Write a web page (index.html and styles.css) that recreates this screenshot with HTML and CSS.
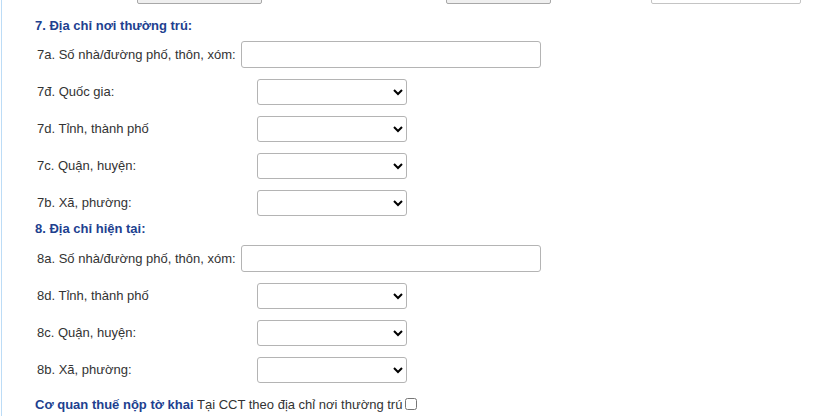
FILE: index.html
```html
<!DOCTYPE html>
<html lang="vi">
<head>
  <meta charset="UTF-8" />
  <meta name="viewport" content="width=device-width, initial-scale=1.0" />
  <title>Địa chỉ</title>
  <link rel="stylesheet" href="styles.css">
</head>
<body>
  <div class="form">
    <div class="top-row">
      <button class="btn btn-1"></button>
      <button class="btn btn-2"></button>
      <input type="text" class="top-input">
    </div>

    <div class="heading h7">7. Địa chỉ nơi thường trú:</div>
    <div class="row">
      <span class="label">7a. Số nhà/đường phố, thôn, xóm:</span>
      <input type="text" class="text-input">
    </div>
    <div class="row">
      <span class="label fixed">7đ. Quốc gia:</span>
      <select class="select"><option></option></select>
    </div>
    <div class="row">
      <span class="label fixed">7d. Tỉnh, thành phố</span>
      <select class="select"><option></option></select>
    </div>
    <div class="row">
      <span class="label fixed">7c. Quận, huyện:</span>
      <select class="select"><option></option></select>
    </div>
    <div class="row">
      <span class="label fixed">7b. Xã, phường:</span>
      <select class="select"><option></option></select>
    </div>

    <div class="heading h8">8. Địa chỉ hiện tại:</div>
    <div class="row">
      <span class="label">8a. Số nhà/đường phố, thôn, xóm:</span>
      <input type="text" class="text-input">
    </div>
    <div class="row">
      <span class="label fixed">8d. Tỉnh, thành phố</span>
      <select class="select"><option></option></select>
    </div>
    <div class="row">
      <span class="label fixed">8c. Quận, huyện:</span>
      <select class="select"><option></option></select>
    </div>
    <div class="row">
      <span class="label fixed">8b. Xã, phường:</span>
      <select class="select"><option></option></select>
    </div>

    <div class="tax-line">
      <b class="tax-title">Cơ quan thuế nộp tờ khai</b> Tại CCT theo địa chỉ nơi thường trú<input type="checkbox" class="check">
    </div>
  </div>
</body>
</html>
```

FILE: styles.css
```css
body {
  margin: 0;
  font-family: "Liberation Sans", Arial, sans-serif;
  font-size: 13px;
  color: #333;
  background-color: #fff;
}
.form {
  margin-left: 1px;
  border-left: 1px solid #bcdcf6;
  height: 416px;
  overflow: hidden;
}
.top-row {
  position: relative;
  height: 4px;
  overflow: hidden;
}
.btn {
  position: absolute;
  bottom: 0;
  height: 20px;
  background-color: #efefef;
  border: 1px solid #a8a8a8;
  border-radius: 2px;
}
.btn-1 {
  left: 135px;
  width: 125px;
}
.btn-2 {
  left: 444px;
  width: 105px;
}
.top-input {
  position: absolute;
  bottom: 0;
  left: 649px;
  width: 150px;
  height: 20px;
  box-sizing: border-box;
  border: 1px solid #c4c4c4;
  border-radius: 2px;
}
.heading {
  padding-left: 33px;
  font-weight: bold;
  color: #213f8f;
  line-height: 16px;
}
.h7 {
  margin-top: 14px;
  margin-bottom: 2px;
}
.h8 {
  margin-bottom: 3px;
}
.row {
  display: flex;
  align-items: center;
  height: 37px;
  padding-left: 35px;
}
.label {
  white-space: nowrap;
}
.label.fixed {
  width: 220px;
}
.text-input {
  margin-left: 5px;
  width: 300px;
  height: 27px;
  box-sizing: border-box;
  border: 1px solid #b4b4b4;
  border-radius: 3px;
}
.select {
  width: 150px;
  height: 26px;
  box-sizing: border-box;
  border: 1px solid #b4b4b4;
  border-radius: 3px;
  background-color: #fff;
}
.tax-line {
  margin-top: 8px;
  padding-left: 33px;
  line-height: 18px;
  white-space: nowrap;
}
.tax-title {
  color: #213f8f;
}
.check {
  margin: 0 0 0 3px;
  width: 12px;
  height: 12px;
  vertical-align: -1px;
}
```
